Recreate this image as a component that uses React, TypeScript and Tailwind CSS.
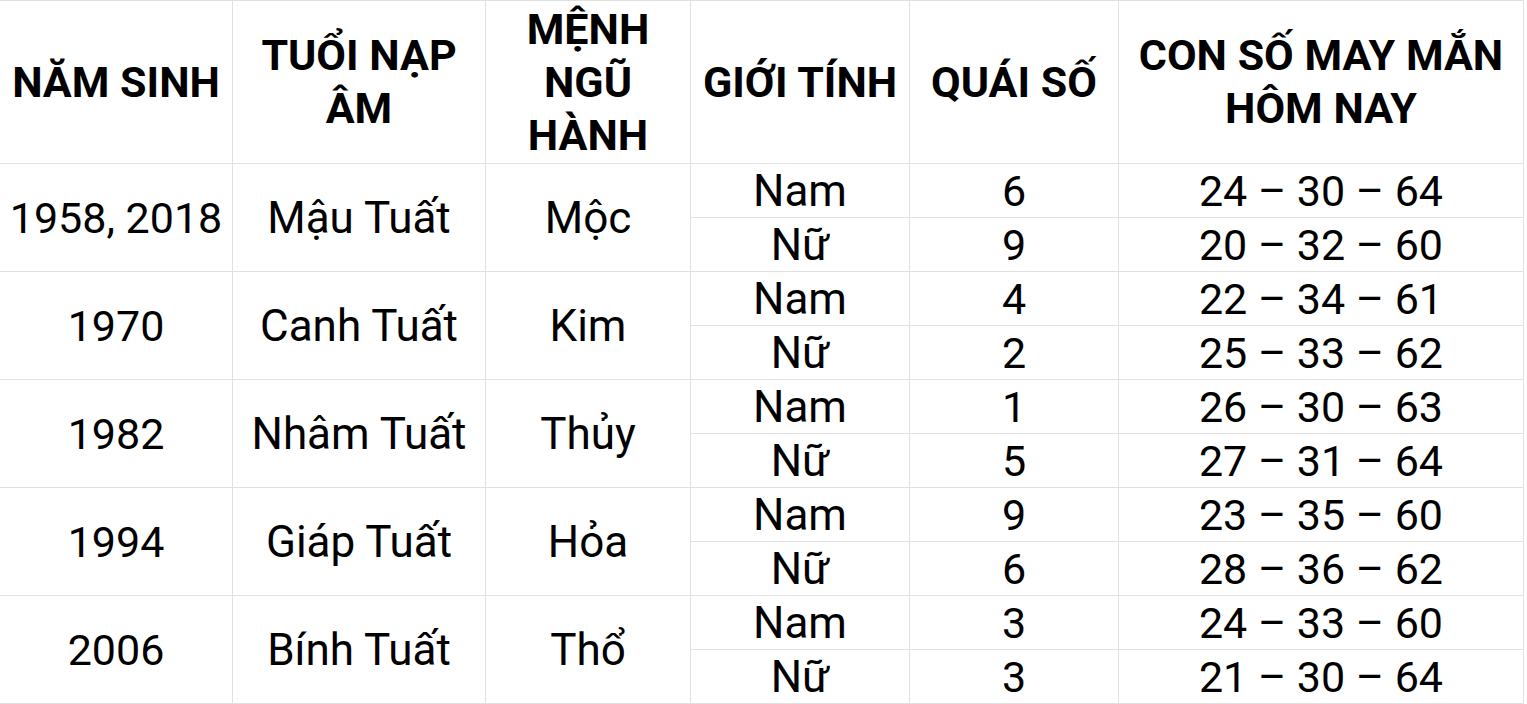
import React from "react";

const groups = [
  { year: "1958, 2018", tuoi: "Mậu Tuất", menh: "Mộc", rows: [["Nam", "6", "24 – 30 – 64"], ["Nữ", "9", "20 – 32 – 60"]] },
  { year: "1970", tuoi: "Canh Tuất", menh: "Kim", rows: [["Nam", "4", "22 – 34 – 61"], ["Nữ", "2", "25 – 33 – 62"]] },
  { year: "1982", tuoi: "Nhâm Tuất", menh: "Thủy", rows: [["Nam", "1", "26 – 30 – 63"], ["Nữ", "5", "27 – 31 – 64"]] },
  { year: "1994", tuoi: "Giáp Tuất", menh: "Hỏa", rows: [["Nam", "9", "23 – 35 – 60"], ["Nữ", "6", "28 – 36 – 62"]] },
  { year: "2006", tuoi: "Bính Tuất", menh: "Thổ", rows: [["Nam", "3", "24 – 33 – 60"], ["Nữ", "3", "21 – 30 – 64"]] },
];

function H({ children }: { children: React.ReactNode }) {
  return (
    <div className="bg-white flex items-center justify-center text-center font-bold text-[43px] leading-[53px] whitespace-nowrap">
      {children}
    </div>
  );
}

function C({ children, span, num }: { children: React.ReactNode; span?: boolean; num?: boolean }) {
  return (
    <div
      className={
        (span ? "row-span-2 " : "") +
        (num ? "text-[43px] " : "text-[44px] ") +
        "bg-white flex items-center justify-center text-center leading-[53px] whitespace-nowrap pt-[2px]"
      }
    >
      {children}
    </div>
  );
}

export default function App() {
  return (
    <div className="bg-white w-[1527px] h-[704px] overflow-hidden">
      <div
        className="w-fit bg-[#e0e0e0] pt-px pr-px pb-px grid grid-cols-[232px_252px_204px_218px_208px_404px] grid-rows-[162px_repeat(10,53px)] gap-px text-black"
        style={{ fontFamily: "Roboto, 'Noto Sans', sans-serif" }}
      >
        <H>NĂM SINH</H>
        <H>
          TUỔI NẠP
          <br />
          ÂM
        </H>
        <H>
          MỆNH
          <br />
          NGŨ
          <br />
          HÀNH
        </H>
        <H>GIỚI TÍNH</H>
        <H>QUÁI SỐ</H>
        <H>
          CON SỐ MAY MẮN
          <br />
          HÔM NAY
        </H>
        {groups.map((g) => (
          <React.Fragment key={g.year}>
            <C span num>{g.year}</C>
            <C span>{g.tuoi}</C>
            <C span>{g.menh}</C>
            <C>{g.rows[0][0]}</C>
            <C num>{g.rows[0][1]}</C>
            <C num>{g.rows[0][2]}</C>
            <C>{g.rows[1][0]}</C>
            <C num>{g.rows[1][1]}</C>
            <C num>{g.rows[1][2]}</C>
          </React.Fragment>
        ))}
      </div>
    </div>
  );
}
